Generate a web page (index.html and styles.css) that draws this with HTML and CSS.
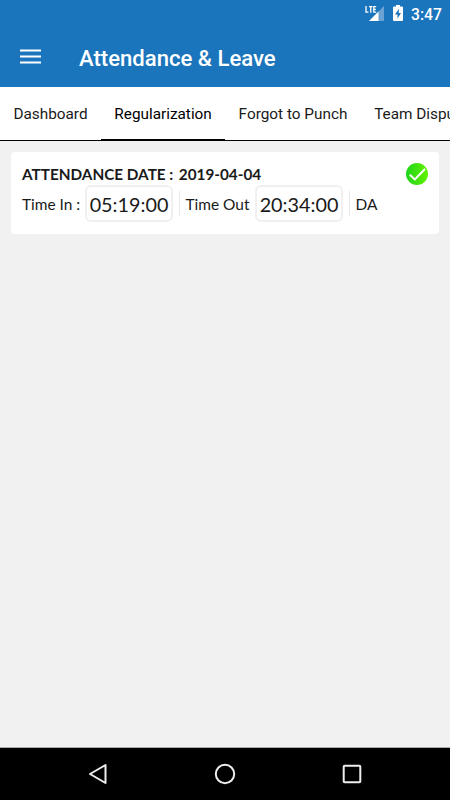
FILE: index.html
```html
<!DOCTYPE html>
<html lang="en">
<head>
<meta charset="utf-8">
<title>Attendance &amp; Leave</title>
<link rel="stylesheet" href="styles.css">
</head>
<body>
<div class="screen">
  <header class="top">
    <div class="status">
      <svg class="signal" width="20" height="18" viewBox="0 0 20 18">
        <path d="M19 1v15h-6V7z" fill="#6aa3d3"/>
        <path d="M13.500 6.500V16H4z" fill="#fff"/>
        <path d="M1 1v6.200h2.400M4 1.600h3.600M5.800 1.600v6.200M11.200 1.600H8.800v5.600h2.400M8.800 4.400h2.100" fill="none" stroke="#fff" stroke-width="1.300"/>
      </svg>
      <svg class="battery" width="10" height="16" viewBox="0 0 10 16">
        <path d="M3 0h4v1.500h2q1 0 1 1V15q0 1-1 1H1q-1 0-1-1V2.500q0-1 1-1h2z" fill="#fff"/>
        <path d="M6 3.800L2 9.500h2.500V13.500L8 8H5.700z" fill="#1b75bc"/>
      </svg>
      <span class="clock">3:47</span>
    </div>
    <div class="bar">
      <svg class="menu" width="21" height="16" viewBox="0 0 21 16">
        <path d="M0 1.500h21M0 7.500h21M0 13.500h21" stroke="#fff" stroke-width="2"/>
      </svg>
      <h1 class="title">Attendance &amp; Leave</h1>
    </div>
  </header>
  <nav class="tabs">
    <a class="tab">Dashboard</a>
    <a class="tab active">Regularization</a>
    <a class="tab">Forgot to Punch</a>
    <a class="tab">Team Dispute</a>
  </nav>
  <main class="content">
    <section class="card">
      <div class="date-row">
        <strong class="label">ATTENDANCE DATE :</strong>
        <strong class="date">2019-04-04</strong>
        <svg class="check" width="22" height="22" viewBox="0 0 22 22">
          <defs><linearGradient id="green" x1="0" x2="1"><stop offset="0" stop-color="#1fd41b"/><stop offset="1" stop-color="#62f200"/></linearGradient></defs>
          <circle cx="11" cy="11" r="11" fill="url(#green)"/>
          <path d="M3.800 11.700l5 4.700L19 6" fill="none" stroke="#fff" stroke-width="2"/>
        </svg>
      </div>
      <div class="time-row">
        <span class="in">Time In :</span>
        <span class="time">05:19:00</span>
        <span class="out">Time Out</span>
        <span class="time">20:34:00</span>
        <span class="out code">DA</span>
      </div>
    </section>
  </main>
  <footer class="nav">
    <svg width="20" height="22" viewBox="0 0 20 22"><path d="M17.500 2v18L2 11z" fill="none" stroke="#eee" stroke-width="2" stroke-linejoin="round"/></svg>
    <svg width="22" height="22" viewBox="0 0 22 22"><circle cx="11" cy="11" r="9.200" fill="none" stroke="#eee" stroke-width="2"/></svg>
    <svg width="20" height="20" viewBox="0 0 20 20"><rect x="1.700" y="1.700" width="16.600" height="16.600" rx="1" fill="none" stroke="#eee" stroke-width="2"/></svg>
  </footer>
</div>
</body>
</html>
```
FILE: styles.css
```css
* { box-sizing: border-box; }
body { margin: 0; font-family: Roboto, sans-serif; color: #1a1a1a; }
.screen { width: 450px; height: 800px; display: flex; flex-direction: column; overflow: hidden; background: #f1f1f1; }
.top { height: 87px; flex: none; background: #1b75bc; color: #fff; }
.status { height: 28px; display: flex; align-items: flex-start; padding: 5px 9px 0 0; justify-content: flex-end; }
.battery { margin-left: 8px; }
.clock { width: 30px; margin-left: 8px; font-size: 15.700px; line-height: 19px; font-weight: 500; white-space: nowrap; }
.bar { height: 59px; display: flex; align-items: center; padding-left: 20px; }
.menu { margin: -1px 38px 0 0; }
.title { margin: 0; font-size: 22.100px; line-height: 28px; font-weight: 500; white-space: nowrap; }
.tabs { height: 54px; flex: none; display: flex; background: #fff; border-bottom: 1px solid #000; overflow: hidden; }
.tab { flex: none; padding: 0 13.400px; line-height: 55px; font-size: 15.330px; height: 53px; white-space: nowrap; }
.active { border-bottom: 1px solid #000; color: #000; }
.content { flex: 1; padding: 11px; font-family: Lato, sans-serif; }
.card { height: 82px; padding: 11px; background: #fff; border-radius: 4px; }
.date-row { display: flex; height: 22px; line-height: 22px; font-size: 15.300px; white-space: nowrap; }
.date-row strong { font-weight: 700; }
.date { margin-left: 5.500px; }
.check { margin-left: auto; }
.time-row { display: flex; align-items: center; height: 37px; font-size: 15.450px; white-space: nowrap; }
.in { width: 63px; line-height: 25px; padding-top: 1px; }
.time { width: 88px; height: 37px; border: 2px solid #f0f0f0; border-radius: 6px; line-height: 35px; font-size: 19.800px; text-align: center; }
.out { width: 76px; height: 25px; margin-left: 6px; padding: 1px 0 0 5.500px; line-height: 25px; border-left: 1px solid #e8e8e8; }
.code { width: auto; }
.nav { height: 53px; flex: none; display: flex; align-items: center; justify-content: space-between; padding: 0 88px; background: #000; border-top: 1px solid #aaa; }
```
